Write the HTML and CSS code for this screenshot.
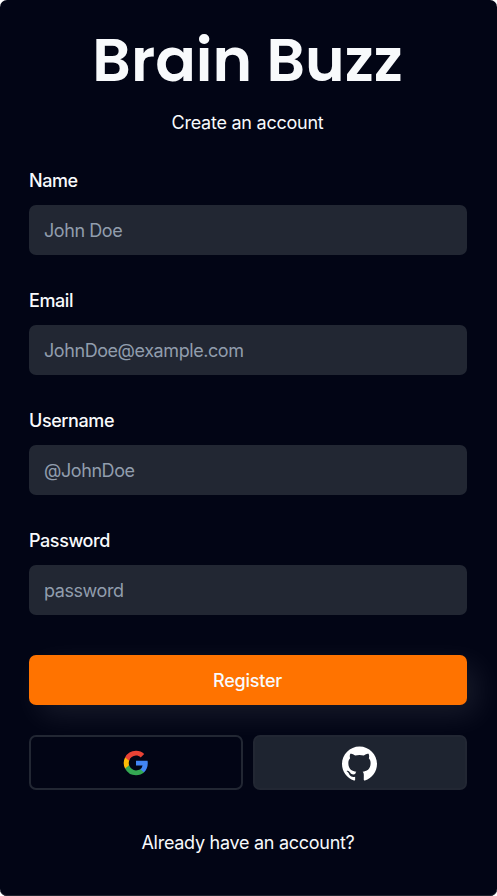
FILE: index.html
```html
<!DOCTYPE html>
<html lang="en">
<head>
<meta charset="utf-8">
<title>Brain Buzz</title>
<link rel="stylesheet" href="styles.css">
</head>
<body>
<main class="card">
  <h1 class="title">Brain Buzz</h1>
  <p class="subtitle">Create an account</p>
  <form class="form">
    <div class="field">
      <label class="label" for="name">Name</label>
      <input class="input" id="name" type="text" placeholder="John Doe">
    </div>
    <div class="field">
      <label class="label" for="email">Email</label>
      <input class="input" id="email" type="email" placeholder="JohnDoe@example.com">
    </div>
    <div class="field">
      <label class="label" for="username">Username</label>
      <input class="input" id="username" type="text" placeholder="@JohnDoe">
    </div>
    <div class="field">
      <label class="label" for="password">Password</label>
      <input class="input" id="password" type="password" placeholder="password">
    </div>
    <button class="register" type="button">Register</button>
  </form>
  <div class="social">
    <button class="provider" type="button" aria-label="Google">
      <svg class="google" viewBox="0 0 24 24">
        <path fill="#4285F4" d="M23.76 12.27c0-.85-.08-1.67-.22-2.45H12v4.64h6.6a5.64 5.64 0 0 1-2.45 3.7v3.07h3.96c2.32-2.14 3.65-5.28 3.65-8.96z"/>
        <path fill="#34A853" d="M12 24.25c3.31 0 6.08-1.1 8.11-2.97l-3.96-3.07c-1.1.74-2.5 1.17-4.15 1.17-3.19 0-5.9-2.15-6.86-5.05H1.05v3.17A12.25 12.25 0 0 0 12 24.25z"/>
        <path fill="#FBBC05" d="M5.14 14.33a7.36 7.36 0 0 1 0-4.66V6.5H1.05a12.25 12.25 0 0 0 0 11l4.09-3.17z"/>
        <path fill="#EA4335" d="M12 4.62c1.8 0 3.42.62 4.69 1.83l3.51-3.51A11.77 11.77 0 0 0 12-.25 12.25 12.25 0 0 0 1.05 6.5l4.09 3.17C6.1 6.77 8.81 4.62 12 4.62z"/>
      </svg>
    </button>
    <button class="provider provider-filled" type="button" aria-label="GitHub">
      <svg class="github" viewBox="0 0 24 24">
        <path fill="#fff" d="M12 .297c-6.63 0-12 5.373-12 12 0 5.303 3.438 9.8 8.205 11.385.6.113.82-.258.82-.577 0-.285-.01-1.04-.015-2.04-3.338.724-4.042-1.61-4.042-1.61C4.422 18.07 3.633 17.7 3.633 17.7c-1.087-.744.084-.729.084-.729 1.205.084 1.838 1.236 1.838 1.236 1.07 1.835 2.809 1.305 3.495.998.108-.776.417-1.305.76-1.605-2.665-.3-5.466-1.332-5.466-5.93 0-1.31.465-2.38 1.235-3.22-.135-.303-.54-1.523.105-3.176 0 0 1.005-.322 3.3 1.23.96-.267 1.98-.399 3-.405 1.02.006 2.04.138 3 .405 2.28-1.552 3.285-1.23 3.285-1.23.645 1.653.24 2.873.12 3.176.765.84 1.23 1.91 1.23 3.22 0 4.61-2.805 5.625-5.475 5.92.42.36.81 1.096.81 2.22 0 1.606-.015 2.896-.015 3.286 0 .315.21.69.825.57C20.565 22.092 24 17.592 24 12.297c0-6.627-5.373-12-12-12"/>
      </svg>
    </button>
  </div>
  <p class="footer">Already have an account?</p>
</main>
</body>
</html>
```
FILE: styles.css
```css
* { box-sizing: border-box; }
body {
  margin: 0;
  background: #fff;
  font-family: Inter, sans-serif;
  font-size: 18px;
  line-height: 28px;
  letter-spacing: -0.25px;
  color: #f8fafc;
}
.card {
  height: 896px;
  padding: 29px 30px 0 29px;
  background: #020515;
  border-radius: 7px;
  box-shadow: inset 0 -1px 0 #20232e;
}
.title {
  margin: 0;
  padding-right: 1px;
  font-family: Poppins, Inter, sans-serif;
  font-feature-settings: "cv11" 1;
  font-size: 60px;
  font-weight: 600;
  line-height: 62px;
  letter-spacing: 0;
  text-align: center;
  white-space: nowrap;
}
.subtitle {
  margin: 18px 0 30px;
  padding-right: 1px;
  text-align: center;
}
.form { display: flex; flex-direction: column; }
.field {
  display: flex;
  flex-direction: column;
  gap: 10px;
  margin-bottom: 32px;
}
.label { font-weight: 500; letter-spacing: -0.42px; }
.input {
  width: 100%;
  height: 50px;
  padding: 0 15px;
  border: 0;
  border-radius: 7px;
  background: #222733;
  color: #f8fafc;
  font: inherit;
  letter-spacing: -0.43px;
}
.input::placeholder { color: #919dad; opacity: 1; }
.register {
  height: 50px;
  margin-top: 8px;
  padding: 2px 1px 0 0;
  border: 0;
  border-radius: 7px;
  background: #ff7300;
  color: #f8fafc;
  font: inherit;
  font-weight: 500;
  letter-spacing: -0.25px;
  box-shadow: 10px 10px 30px rgba(255, 255, 255, 0.09);
}
.social {
  display: grid;
  grid-template-columns: 1fr 1fr;
  gap: 10px;
  margin-top: 30px;
}
.provider {
  display: flex;
  align-items: center;
  justify-content: center;
  height: 55px;
  padding: 0;
  border: 2px solid #222733;
  border-radius: 7px;
  background: #020515;
}
.provider-filled { background: #1e2430; }
.google { width: 24px; height: 24px; overflow: visible; }
.github { width: 35px; height: 35px; margin: 1px 1px 0 0; }
.footer { margin: 39px 0 0; letter-spacing: -0.28px; text-align: center; }
```
